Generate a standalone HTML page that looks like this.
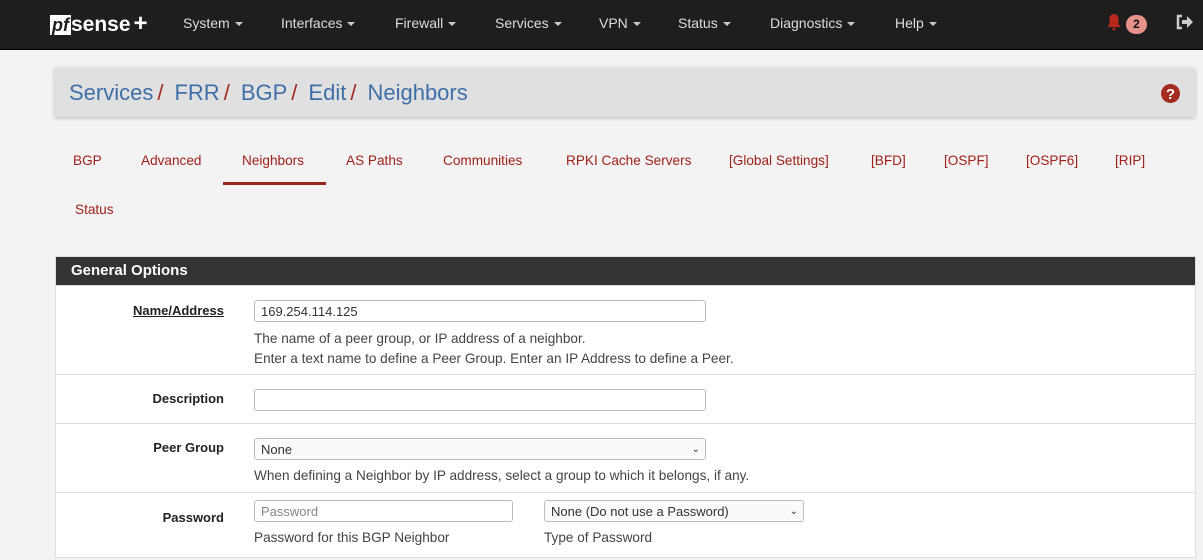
<!DOCTYPE html>
<html><head><style>
body{margin:0;width:1203px;height:560px;overflow:hidden;background:#f3f3f3;font-family:"Liberation Sans",Arial,sans-serif;font-size:14px;color:#333}
.nav{position:absolute;left:0;top:0;width:1203px;height:49px;background:#1e1e1e;border-bottom:1px solid #000}
.nav span{position:absolute;top:15px;color:#ddd;font-size:14px}
.car{display:inline-block;border-left:4px solid transparent;border-right:4px solid transparent;border-top:4px solid #ccc;vertical-align:middle;margin-left:5px}
.logo{position:absolute;left:50px;top:10px;color:#fff;font-weight:bold;font-size:21px}
.logo b{display:inline-block;background:#fff;color:#1e1e1e;font-style:italic;padding:0 2px;font-size:18px;line-height:20px}
.bc{position:absolute;left:55px;top:68px;width:1140px;height:49px;background:#e0e0e0;box-shadow:0 1px 4px rgba(0,0,0,.25);border-radius:2px}
.bc div{position:absolute;left:14px;top:12px;font-size:22px;color:#3d6fa9}
.bc i{color:#a02a1e;font-style:normal;margin:0 11px 0 4px}
.tab{position:absolute;color:#a0201a;font-size:13.6px}
.panel{position:absolute;left:55px;top:256px;width:1139px;height:300px;background:#fff;border:1px solid #ddd}
.ph{height:28px;background:#333;color:#fff;font-weight:bold;font-size:15px;line-height:28px;padding-left:15px}
.row{position:absolute;left:0;width:1139px;border-top:1px solid #ddd}
.lbl{position:absolute;right:971px;font-weight:bold;font-size:13px;color:#222}
.inp{position:absolute;left:198px;height:22px;border:1px solid #bbb;border-radius:3px;background:#fff;font-size:13px;line-height:22px;padding-left:6px;box-sizing:border-box}
.help{position:absolute;left:198px;font-size:13.6px;color:#444;line-height:20px}
</style></head><body>
<div class="nav">
<div class="logo"><b>pf</b>sense<span style="position:static;color:#fff;font-size:24px;margin-left:3px">+</span></div>
<span style="left:183px">System<i class="car"></i></span>
<span style="left:281px">Interfaces<i class="car"></i></span>
<span style="left:395px">Firewall<i class="car"></i></span>
<span style="left:495px">Services<i class="car"></i></span>
<span style="left:599px">VPN<i class="car"></i></span>
<span style="left:678px">Status<i class="car"></i></span>
<span style="left:770px">Diagnostics<i class="car"></i></span>
<span style="left:895px">Help<i class="car"></i></span>
<svg style="position:absolute;left:1106px;top:13px" width="16" height="18" viewBox="0 0 16 18"><path d="M8 1C5 1 3.5 3.5 3.5 6.5V11L1.5 14H14.5L12.5 11V6.5C12.5 3.5 11 1 8 1Z" fill="#b8281c"/><circle cx="8" cy="16" r="1.5" fill="#b8281c"/></svg>
<div style="position:absolute;left:1126px;top:15px;width:21px;height:19px;border-radius:10px;background:#e8908a;color:#111;font-weight:bold;font-size:12px;text-align:center;line-height:19px">2</div>
<svg style="position:absolute;left:1176px;top:14px" width="18" height="16" viewBox="0 0 18 16"><path d="M6 2H2V14H6" stroke="#ccc" stroke-width="2.5" fill="none"/><path d="M6 6H11V2L17 8L11 14V10H6Z" fill="#ccc"/></svg>
</div>
<div class="bc"><div>Services<i>/</i>FRR<i>/</i>BGP<i>/</i>Edit<i>/</i>Neighbors</div>
<svg style="position:absolute;left:1106px;top:16px" width="19" height="19" viewBox="0 0 19 19"><circle cx="9.5" cy="9.5" r="9.5" fill="#a52a1e"/><text x="9.5" y="15" text-anchor="middle" fill="#fff" font-weight="bold" font-size="15" font-family="Liberation Sans">?</text></svg></div>
<span class="tab" style="left:73px;top:153px">BGP</span>
<span class="tab" style="left:141px;top:153px">Advanced</span>
<span class="tab" style="left:242px;top:153px">Neighbors</span>
<div style="position:absolute;left:223px;top:182px;width:103px;height:3px;background:#9b2218"></div>
<span class="tab" style="left:346px;top:153px">AS Paths</span>
<span class="tab" style="left:443px;top:153px">Communities</span>
<span class="tab" style="left:566px;top:153px">RPKI Cache Servers</span>
<span class="tab" style="left:729px;top:153px">[Global Settings]</span>
<span class="tab" style="left:871px;top:153px">[BFD]</span>
<span class="tab" style="left:944px;top:153px">[OSPF]</span>
<span class="tab" style="left:1026px;top:153px">[OSPF6]</span>
<span class="tab" style="left:1115px;top:153px">[RIP]</span>
<span class="tab" style="left:75px;top:202px">Status</span>
<div class="panel"><div class="ph">General Options</div>
<div class="row" style="top:28px;height:88px">
<span class="lbl" style="top:17px;text-decoration:underline">Name/Address</span>
<div class="inp" style="top:14px;width:452px">169.254.114.125</div>
<div class="help" style="top:43px">The name of a peer group, or IP address of a neighbor.<br>Enter a text name to define a Peer Group. Enter an IP Address to define a Peer.</div></div>
<div class="row" style="top:117px;height:48px">
<span class="lbl" style="top:16px">Description</span>
<div class="inp" style="top:14px;width:452px"></div></div>
<div class="row" style="top:166px;height:68px">
<span class="lbl" style="top:16px">Peer Group</span>
<div class="inp" style="top:14px;width:452px;background:#fafafa">None<span style="position:absolute;right:5px;font-size:10px">&#8964;</span></div>
<div class="help" style="top:42px">When defining a Neighbor by IP address, select a group to which it belongs, if any.</div></div>
<div class="row" style="top:235px;height:64px">
<span class="lbl" style="top:17px">Password</span>
<div class="inp" style="top:7px;width:259px;color:#888">Password</div>
<div class="inp" style="top:7px;left:488px;width:260px;background:#fafafa">None (Do not use a Password)<span style="position:absolute;right:5px;font-size:10px">&#8964;</span></div>
<div class="help" style="top:35px">Password for this BGP Neighbor</div>
<div class="help" style="top:35px;left:488px">Type of Password</div></div>
</div>
</body></html>
